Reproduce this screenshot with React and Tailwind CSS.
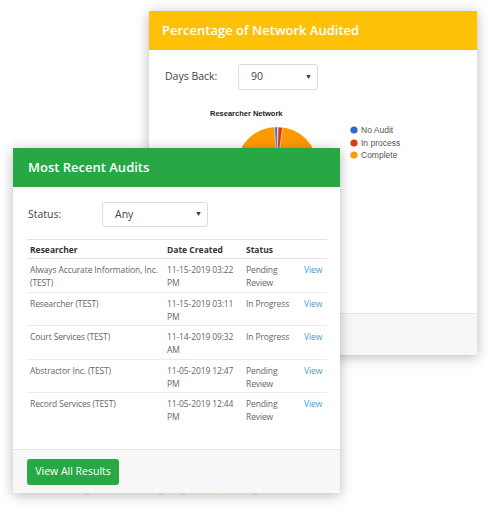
import React from 'react';

const rows = [
  { name: 'Always Accurate Information, Inc. (TEST)', date: '11-15-2019 03:22 PM', status: 'Pending Review' },
  { name: 'Researcher (TEST)', date: '11-15-2019 03:11 PM', status: 'In Progress' },
  { name: 'Court Services (TEST)', date: '11-14-2019 09:32 AM', status: 'In Progress' },
  { name: 'Abstractor Inc. (TEST)', date: '11-05-2019 12:47 PM', status: 'Pending Review' },
  { name: 'Record Services (TEST)', date: '11-05-2019 12:44 PM', status: 'Pending Review' },
];

function Select({ value, className }) {
  return (
    <div className={`flex items-center justify-between rounded-[3px] border border-[#dcdcdc] bg-white pl-3 pr-[5px] text-[#444] ${className}`}>
      <span>{value}</span>
      <span className="text-[7px] text-[#333]">▼</span>
    </div>
  );
}

function PieChart() {
  return (
    <svg width="328" height="200" className="block" style={{ fontFamily: '"Liberation Sans", Arial, sans-serif' }}>
      <text x="61" y="16" fontSize="7.5" fontWeight="bold" fill="#222">Researcher Network</text>
      <circle cx="128" cy="68" r="41" fill="#ff9900" />
      <path d="M128 68 L125.5 27.08 A41 41 0 0 1 128.36 27 Z" fill="#3366cc" stroke="#fff" strokeWidth="0.6" />
      <path d="M128 68 L129.07 27.01 A41 41 0 0 1 133.71 27.4 Z" fill="#dc3912" stroke="#fff" strokeWidth="0.6" />
      <circle cx="205" cy="30" r="3.6" fill="#3366cc" />
      <circle cx="205" cy="43" r="3.6" fill="#dc3912" />
      <circle cx="205" cy="55" r="3.6" fill="#ff9900" />
      <text x="212" y="33" fontSize="8.5" fill="#555">No Audit</text>
      <text x="212" y="46" fontSize="8.5" fill="#555">In process</text>
      <text x="212" y="58" fontSize="8.5" fill="#555">Complete</text>
    </svg>
  );
}

export default function App() {
  return (
    <div className="relative h-[508px] w-[490px] overflow-hidden bg-white" style={{ fontFamily: '"Open Sans", "Noto Sans", sans-serif' }}>
      {/* back card */}
      <div className="absolute left-[149px] top-[11px] flex h-[344px] w-[328px] flex-col bg-white shadow-[0_2px_12px_rgba(0,0,0,0.28)]">
        <div className="flex h-[39px] items-center bg-[#ffc107] px-[13px] text-[13px] font-semibold text-white">
          Percentage of Network Audited
        </div>
        <div className="flex-1 overflow-hidden">
          <div className="flex items-center pt-[14px] text-[10.5px]">
            <span className="w-[89px] pl-[16px] text-[#444]">Days Back:</span>
            <Select value="90" className="h-[26px] w-[80px]" />
          </div>
          <div className="mt-[10px]">
            <PieChart />
          </div>
        </div>
        <div className="h-[42px] border-t border-[#e8e8e8] bg-[#f7f7f7]" />
      </div>

      {/* front card */}
      <div className="absolute left-[13px] top-[148px] flex h-[345px] w-[327px] flex-col bg-white shadow-[0_2px_12px_rgba(0,0,0,0.28)]">
        <div className="flex h-[39px] items-center bg-[#28a745] px-[15px] text-[13px] font-semibold text-white">
          Most Recent Audits
        </div>
        <div className="flex-1 px-[14px] pt-[15px]">
          <div className="flex items-center text-[10.5px]">
            <span className="w-[75px] pl-px text-[#444]">Status:</span>
            <Select value="Any" className="h-[25px] w-[106px]" />
          </div>
          <table className="mt-[12px] w-[300px] table-fixed border-collapse text-[8.5px] leading-[13px]">
            <colgroup>
              <col className="w-[137px]" />
              <col className="w-[79px]" />
              <col className="w-[58px]" />
              <col className="w-[26px]" />
            </colgroup>
            <thead>
              <tr className="h-[19px] border-y border-[#e3e3e3] text-left font-bold text-[#333]">
                <th className="px-[3px]">Researcher</th>
                <th className="px-[3px]">Date Created</th>
                <th className="px-[3px]">Status</th>
                <th />
              </tr>
            </thead>
            <tbody className="tracking-[-0.12px] text-[#666]">
              {rows.map((r) => (
                <tr key={r.name} className="h-[33.5px] border-b border-[#ececec] align-top last:border-b-0">
                  <td className="px-[3px] pt-[4px]">{r.name}</td>
                  <td className="px-[3px] pt-[4px]">{r.date}</td>
                  <td className="px-[3px] pt-[4px]">{r.status}</td>
                  <td className="pl-[3px] pt-[4px] text-[#4a9ad4]">View</td>
                </tr>
              ))}
            </tbody>
          </table>
        </div>
        <div className="flex h-[44px] items-center border-t border-[#e6e6e6] bg-[#f7f7f7] px-[14px]">
          <button type="button" className="h-[26px] w-[92px] rounded-[3px] bg-[#28a745] text-[10.5px] text-white">
            View All Results
          </button>
        </div>
      </div>

      {/* faint marks peeking below */}
      <span className="absolute left-[85px] top-[493px] h-[2px] w-[5px] bg-[#ccc]" />
      <span className="absolute left-[158px] top-[493px] h-[2px] w-[5px] bg-[#ccc]" />
      <span className="absolute left-[181px] top-[493px] h-[2px] w-[5px] bg-[#ccc]" />
      <span className="absolute left-[216px] top-[493px] h-[2px] w-[5px] bg-[#e8dcb0]" />
      <span className="absolute left-[253px] top-[493px] h-[2px] w-[5px] bg-[#ccc]" />
    </div>
  );
}
